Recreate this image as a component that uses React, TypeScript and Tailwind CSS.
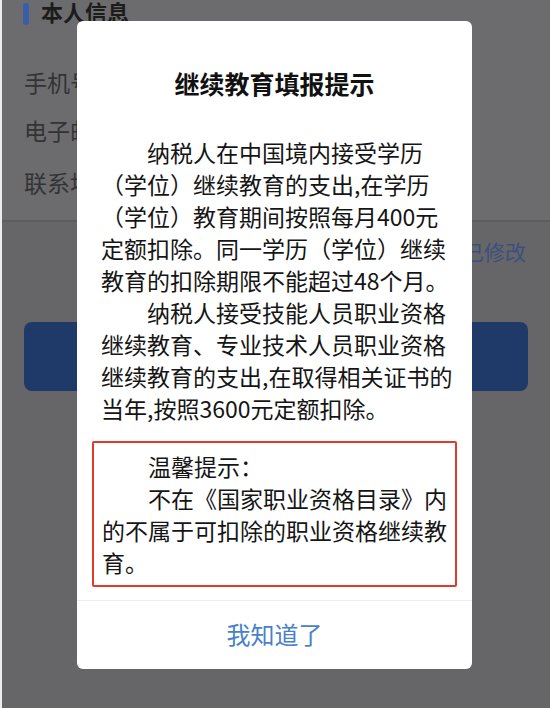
const cjk = { fontFamily: '"Noto Sans CJK SC", "Noto Sans", sans-serif' };

const intro = [
  { text: "纳税人在中国境内接受学历", indent: true },
  { text: "（学位）继续教育的支出,在学历" },
  { text: "（学位）教育期间按照每月400元" },
  { text: "定额扣除。同一学历（学位）继续" },
  { text: "教育的扣除期限不能超过48个月。" },
  { text: "纳税人接受技能人员职业资格", indent: true },
  { text: "继续教育、专业技术人员职业资格" },
  { text: "继续教育的支出,在取得相关证书的" },
  { text: "当年,按照3600元定额扣除。" },
];

const tips = [
  { text: "温馨提示：", indent: true },
  { text: "不在《国家职业资格目录》内", indent: true },
  { text: "的不属于可扣除的职业资格继续教" },
  { text: "育。" },
];

function Lines({ items }: { items: { text: string; indent?: boolean }[] }) {
  return (
    <>
      {items.map((l, i) => (
        <div key={i} className={`whitespace-nowrap ${l.indent ? "pl-[2em]" : ""}`}>
          {l.text}
        </div>
      ))}
    </>
  );
}

export default function App() {
  return (
    <div className="relative h-[708px] w-[550px] overflow-hidden bg-[#666668] border-l-2 border-[#ececec]" style={cjk}>
      {/* page behind the mask */}
      <div className="bg-[#6c6c6e]">
        <div className="flex items-center gap-3 pl-[21px] h-[28px]">
          <span className="h-[22px] w-[6px] rounded-full bg-[#3b5ca8]" />
          <span className="text-[22px] font-bold text-[#1c1c1c] leading-none -mt-[6px]">本人信息</span>
        </div>
        <div className="pl-[22px] text-[23px] text-[#333335] leading-none h-[192px] flex flex-col">
          <div className="mt-[43px]">手机号</div>
          <div className="mt-[25px]">电子邮箱</div>
          <div className="mt-[29px]">联系地址</div>
        </div>
      </div>
      <div className="h-[2px] bg-[#5d5d5f]" />
      <div className="flex justify-end pr-[24px] pt-[14px] h-[100px]">
        <span className="text-[21px] text-[#3c4f7e]">已修改</span>
      </div>
      <div className="mx-[22px] h-[69px] rounded-lg bg-[#1f3968]" />

      {/* dialog */}
      <div className="absolute inset-0 flex justify-center pt-[21px] pr-[3px]">
        <div className="w-[395px] h-[648px] rounded-md bg-white flex flex-col">
          <div className="pt-[46px] text-center text-[25px] font-bold leading-8 text-[#111]">继续教育填报提示</div>
          <div className="mt-[37px] px-[24px] text-[23px] leading-[32px] text-[#151515]">
            <Lines items={intro} />
          </div>
          <div className="mx-[15px] mt-[17px] border-2 border-[#e03a30] rounded-[2px] pl-[8px] pr-[4px] py-[7px] text-[23px] leading-[32px] text-[#151515]">
            <Lines items={tips} />
          </div>
          <div className="mt-[13px] border-t border-[#eeeeee] flex-1 flex items-center justify-center">
            <span className="text-[24px] text-[#4a7fc9] -mt-[2px]">我知道了</span>
          </div>
        </div>
      </div>
    </div>
  );
}
